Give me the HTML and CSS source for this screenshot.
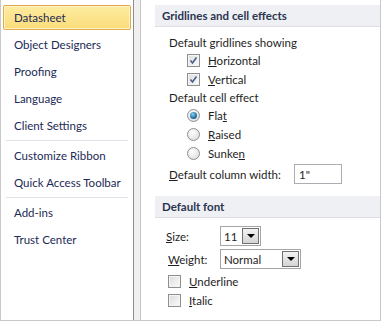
FILE: index.html
```html
<!DOCTYPE html>
<html lang="en">
<head>
<meta charset="UTF-8"><meta name="viewport" content="width=device-width,initial-scale=1">
<title>Options</title>
<link rel="stylesheet" href="styles.css">
</head>
<body>
<div class="win">
  <nav class="side">
    <div class="item sel">Datasheet</div>
    <div class="item">Object Designers</div>
    <div class="item">Proofing</div>
    <div class="item">Language</div>
    <div class="item">Client Settings</div>
    <div class="sep"></div>
    <div class="item">Customize Ribbon</div>
    <div class="item">Quick Access Toolbar</div>
    <div class="sep"></div>
    <div class="item">Add-ins</div>
    <div class="item">Trust Center</div>
  </nav>
  <div class="gutter"></div>
  <main class="pane">
    <section>
      <h2 class="sec">Gridlines and cell effects</h2>
      <div class="body grid-body">
        <div class="row lbl">Default gridlines showing</div>
        <label class="row opt"><span class="chk on"><svg viewBox="0 0 11 11"><path d="M2.5 5.5 L4.5 8 L8.5 2.5" fill="none" stroke="#4a5f8e" stroke-width="1.6"/></svg></span><span><u>H</u>orizontal</span></label>
        <label class="row opt"><span class="chk on"><svg viewBox="0 0 11 11"><path d="M2.5 5.5 L4.5 8 L8.5 2.5" fill="none" stroke="#4a5f8e" stroke-width="1.6"/></svg></span><span><u>V</u>ertical</span></label>
        <div class="row lbl">Default cell effect</div>
        <label class="row opt"><span class="rad on"></span><span>Fla<u>t</u></span></label>
        <label class="row opt"><span class="rad"></span><span><u>R</u>aised</span></label>
        <label class="row opt"><span class="rad"></span><span>Sunke<u>n</u></span></label>
        <div class="row field"><span><u>D</u>efault column width:</span><span class="txt">1"</span></div>
      </div>
    </section>
    <section>
      <h2 class="sec">Default font</h2>
      <div class="body font-body">
        <div class="row pick"><span class="key size-key"><u>S</u>ize:</span><span class="combo narrow"><span class="val">11</span><span class="drop"></span></span></div>
        <div class="row pick"><span class="key"><u>W</u>eight:</span><span class="combo wide"><span class="val">Normal</span><span class="drop"></span></span></div>
        <label class="row opt"><span class="chk"></span><span><u>U</u>nderline</span></label>
        <label class="row opt"><span class="chk"></span><span><u>I</u>talic</span></label>
      </div>
    </section>
  </main>
</div>
</body>
</html>
```

FILE: styles.css
```css
*{box-sizing:border-box}
body{margin:0;background:#fff;font-family:Lato,"Noto Sans",sans-serif;font-size:11.5px;color:#1e1e1e}
.win{display:flex;width:381px;height:321px;border:1px solid #c9c9c9;border-top:none;background:#fff;white-space:nowrap}
.side{width:133px;padding:5px 2px 0 2px;border-right:1px solid #8c8c8c}
.item{height:25px;margin-bottom:2px;padding-left:10px;display:flex;align-items:center;color:#1c2a55;border:1px solid transparent;border-radius:2px}
.item.sel{background:linear-gradient(#fdeca0,#fbdc7a);border-color:#e3a94c;box-shadow:inset 0 0 0 1px #fff3c8}
.sep{height:1px;margin:0 3px 2px 3px;background:#dfe3ea}
.gutter{width:7px;background:#f0f0f0;border-right:1px solid #c4c4c4}
.pane{flex:1;padding-top:5px}
.sec{margin:0 0 0 14px;height:22px;padding-left:7px;padding-bottom:1px;display:flex;align-items:center;font-size:11.5px;font-weight:bold;color:#2b3550;background:#eff0f4;border-bottom:1px solid #dcdee3}
.body{padding-left:28px}
.grid-body{padding-top:7px;padding-bottom:12px}
.row{display:flex;align-items:center;height:19px}
.lbl{height:17px}
.opt{padding-left:18px}
.opt .chk,.opt .rad{margin-right:8px}
.chk{width:13px;height:13px;border:1px solid #8e8f8f;background:linear-gradient(135deg,#dcdcdc,#fbfbfb);box-shadow:inset 0 0 0 1px #f4f4f4;display:flex;align-items:center;justify-content:center}
.chk svg{width:11px;height:11px}
.rad{width:13px;height:13px;border-radius:50%;border:1px solid #8e8f8f;background:radial-gradient(circle at 40% 35%,#fff,#d6d6d6);display:flex;align-items:center;justify-content:center}
.rad.on::after{content:"";width:7px;height:7px;border-radius:50%;background:radial-gradient(circle at 40% 35%,#8fd0f0,#1d6fa3 60%,#0d4a78)}
.field{height:20px;margin-top:1px}
.txt{margin-left:auto;margin-right:38px;width:48px;height:20px;border:1px solid #abadb3;padding-left:4px;display:flex;align-items:center}
.font-body{padding-top:8px;padding-left:27px}
.pick{height:20px;margin-bottom:3px}
.key{width:52px}
.size-key{margin-left:-2px;width:54px}
.combo{height:20px;border:1px solid #a5a5a5;display:flex;align-items:center;justify-content:space-between;padding:1px 1px 1px 3px}
.narrow{width:41px}
.wide{width:81px}
.drop{width:17px;height:16px;border:1px solid #707070;background:linear-gradient(#f2f2f2,#d4d4d4);display:flex;align-items:center;justify-content:center}
.drop::after{content:"";border-left:4px solid transparent;border-right:4px solid transparent;border-top:4px solid #000}
.font-body .opt{padding-left:0}
```
